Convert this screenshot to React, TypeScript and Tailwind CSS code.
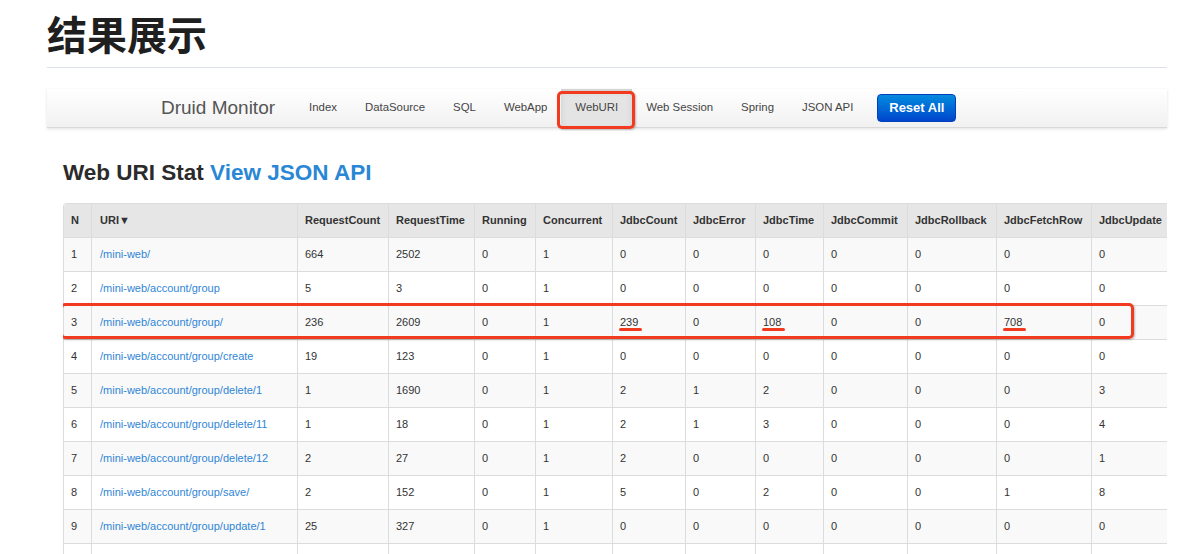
import React from "react";

const navItems = ["Index", "DataSource", "SQL", "WebApp", "WebURI", "Web Session", "Spring", "JSON API"];

const columns = [
  { name: "N", w: 27 },
  { name: "URI▼", w: 206 },
  { name: "RequestCount", w: 91 },
  { name: "RequestTime", w: 86 },
  { name: "Running", w: 61 },
  { name: "Concurrent", w: 77 },
  { name: "JdbcCount", w: 73 },
  { name: "JdbcError", w: 70 },
  { name: "JdbcTime", w: 68 },
  { name: "JdbcCommit", w: 84 },
  { name: "JdbcRollback", w: 89 },
  { name: "JdbcFetchRow", w: 95 },
  { name: "JdbcUpdate", w: 96 },
];

const rows: string[][] = [
  ["1", "/mini-web/", "664", "2502", "0", "1", "0", "0", "0", "0", "0", "0", "0"],
  ["2", "/mini-web/account/group", "5", "3", "0", "1", "0", "0", "0", "0", "0", "0", "0"],
  ["3", "/mini-web/account/group/", "236", "2609", "0", "1", "239", "0", "108", "0", "0", "708", "0"],
  ["4", "/mini-web/account/group/create", "19", "123", "0", "1", "0", "0", "0", "0", "0", "0", "0"],
  ["5", "/mini-web/account/group/delete/1", "1", "1690", "0", "1", "2", "1", "2", "0", "0", "0", "3"],
  ["6", "/mini-web/account/group/delete/11", "1", "18", "0", "1", "2", "1", "3", "0", "0", "0", "4"],
  ["7", "/mini-web/account/group/delete/12", "2", "27", "0", "1", "2", "0", "0", "0", "0", "0", "1"],
  ["8", "/mini-web/account/group/save/", "2", "152", "0", "1", "5", "0", "2", "0", "0", "1", "8"],
  ["9", "/mini-web/account/group/update/1", "25", "327", "0", "1", "0", "0", "0", "0", "0", "0", "0"],
  ["", "", "", "", "", "", "", "", "", "", "", "", ""],
];

// cells marked in red in the screenshot (row 3)
const marked = new Set([6, 8, 11]);

export default function App() {
  return (
    <div className="w-[1202px] h-[554px] overflow-hidden bg-white font-['Liberation_Sans','Helvetica_Neue',Arial,sans-serif] text-[#333]">
      <div className="ml-[47px] w-[1120px]">
        <h1 className="pt-[11px] text-[40px] leading-[44px] font-bold text-[#1f1f1f] font-['Noto_Sans_CJK_SC',sans-serif]">
          结果展示
        </h1>
        <div className="mt-[12px] h-px bg-[#dde2e8]" />

        {/* navbar */}
        <div className="mt-[21px] h-[39px] flex items-center pl-[114px] bg-gradient-to-b from-white to-[#f1f1f1] border-b border-[#d8d8d8] shadow-[0_1px_3px_rgba(0,0,0,0.12)]">
          <span className="text-[19px] text-[#555] mr-[20px]">Druid Monitor</span>
          {navItems.map((item) => (
            <div
              key={item}
              className={
                "relative h-full flex items-center px-[14px] text-[11.4px] text-[#444] " +
                (item === "WebURI" ? "bg-[#e4e4e4] shadow-[inset_0_2px_6px_rgba(0,0,0,0.1)]" : "")
              }
            >
              {item}
              {item === "WebURI" && (
                <div className="absolute -left-[4px] -right-[3px] top-[2px] -bottom-[2px] border-[3px] border-[#f23a1f] rounded-[5px] shadow-[1px_1px_2px_rgba(0,0,0,0.25)]" />
              )}
            </div>
          ))}
          <button className="ml-[10px] w-[79px] h-[28px] rounded-[4px] bg-gradient-to-b from-[#0a8ade] to-[#0044cc] border border-[#0040b8] text-white text-[13px] font-bold">
            Reset All
          </button>
        </div>

        {/* heading */}
        <h2 className="mt-[31px] ml-[16px] text-[22.5px] leading-[28px] font-bold text-[#2b2b2b]">
          Web URI Stat <span className="text-[#2a87d5]">View JSON API</span>
        </h2>

        {/* table */}
        <div className="relative mt-[16px] ml-[16px] w-[1104px] overflow-x-clip">
          <table className="table-fixed border-separate border-spacing-0 border-l border-t border-[#dcdcdc] rounded-tl-[4px] text-[11px]" style={{ width: columns.reduce((s, c) => s + c.w, 0) }}>
            <colgroup>
              {columns.map((c) => (
                <col key={c.name} style={{ width: c.w }} />
              ))}
            </colgroup>
            <thead>
              <tr className="h-[33px] bg-[#e6e6e6]">
                {columns.map((c, i) => (
                  <th
                    key={c.name}
                    className={
                      "text-left font-bold text-[#333] px-[7px] whitespace-nowrap " +
                      (i > 0 ? "border-l border-[#dcdcdc] " : "rounded-tl-[4px] ") +
                      (i === 1 ? "pl-[8px]" : "")
                    }
                  >
                    {c.name}
                  </th>
                ))}
              </tr>
            </thead>
            <tbody>
              {rows.map((r, ri) => (
                <tr key={ri} className={"h-[34px] " + (ri % 2 === 0 ? "bg-[#f9f9f9]" : "bg-white")}>
                  {r.map((v, ci) => (
                    <td
                      key={ci}
                      className={
                        "border-t border-[#dcdcdc] px-[7px] whitespace-nowrap " +
                        (ci > 0 ? "border-l " : "") +
                        (ci === 1 ? "pl-[8px] text-[#2f86d6]" : "text-[#333]")
                      }
                    >
                      {ri === 2 && marked.has(ci) ? (
                        <span className="relative">
                          {v}
                          <span className="absolute left-[-1px] right-[-4px] top-[12px] h-[3px] rounded-full bg-[#f23a1f]" />
                        </span>
                      ) : (
                        v
                      )}
                    </td>
                  ))}
                </tr>
              ))}
            </tbody>
          </table>
          {/* red annotation around row 3 */}
          <div className="absolute left-[-3px] top-[100px] w-[1074px] h-[36px] border-[3px] border-[#f23a1f] rounded-[5px] shadow-[1px_1px_2px_rgba(0,0,0,0.25)]" />
        </div>
      </div>
    </div>
  );
}
